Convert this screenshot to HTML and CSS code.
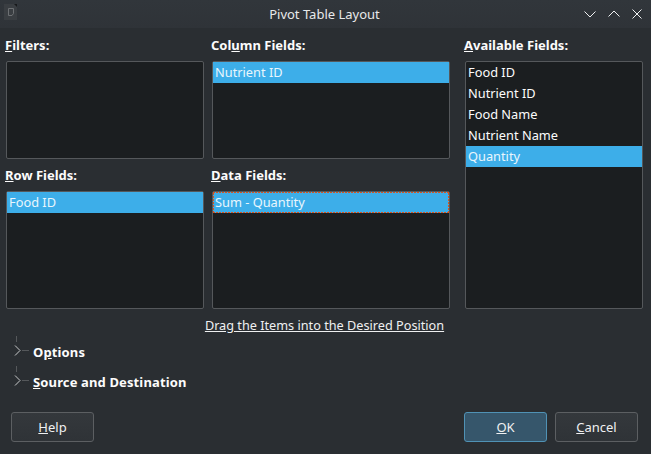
FILE: index.html
```html
<!DOCTYPE html>
<html>
  <head>
    <meta charset="utf-8" />
    <title>Pivot Table Layout</title>
    <link rel="stylesheet" href="styles.css">
  </head>

  <body>
    <div class="dialog">
      <header class="titlebar">
        <svg class="app-icon" width="18" height="18" viewBox="0 0 18 18">
          <rect x="1" y="1" width="13" height="16" fill="#3a3e42" />
          <path d="M5.500 5.500h5v5l-1.500 2h-3.500z" fill="none" stroke="#6d7073" />
          <path d="M11 1h3v3z" fill="#17191b" />
        </svg>
        <span class="title">Pivot Table Layout</span>
        <div class="window-buttons">
          <svg width="12" height="8" viewBox="0 0 12 8"><path d="M.5 1.500l5.500 5.500 5.500-5.500" /></svg>
          <svg width="12" height="8" viewBox="0 0 12 8"><path d="M.5 6.500l5.500-5.500 5.500 5.500" /></svg>
          <svg width="10" height="10" viewBox="0 0 10 10"><path d="M.5.500l9 9M9.500.500l-9 9" /></svg>
        </div>
      </header>

      <main class="fields">
        <section class="field filters">
          <h2><u>F</u>ilters:</h2>
          <ul class="list"></ul>
        </section>
        <section class="field columns">
          <h2>Col<u>u</u>mn Fields:</h2>
          <ul class="list"><li class="selected">Nutrient ID</li></ul>
        </section>
        <section class="field available">
          <h2><u>A</u>vailable Fields:</h2>
          <ul class="list">
            <li>Food ID</li>
            <li>Nutrient ID</li>
            <li>Food Name</li>
            <li>Nutrient Name</li>
            <li class="selected">Quantity</li>
          </ul>
        </section>
        <section class="field rows">
          <h2><u>R</u>ow Fields:</h2>
          <ul class="list"><li class="selected">Food ID</li></ul>
        </section>
        <section class="field data">
          <h2><u>D</u>ata Fields:</h2>
          <ul class="list"><li class="selected focused">Sum - Quantity</li></ul>
        </section>
      </main>

      <p class="hint">Drag the Items into the Desired Position</p>

      <div class="expander">
        <svg width="27" height="24" viewBox="0 0 27 24">
          <path class="guide" d="M10.500 0v6M16 14.500h7" />
          <path class="arrow" d="M9 9.500l5 5-5 5" />
        </svg>
        <span>O<u>p</u>tions</span>
      </div>
      <div class="expander">
        <svg width="27" height="24" viewBox="0 0 27 24">
          <path class="guide" d="M10.500 0v6M16 14.500h7" />
          <path class="arrow" d="M9 9.500l5 5-5 5" />
        </svg>
        <span><u>S</u>ource and Destination</span>
      </div>

      <footer class="buttons">
        <button><u>H</u>elp</button>
        <span class="spacer"></span>
        <button class="primary"><u>O</u>K</button>
        <button><u>C</u>ancel</button>
      </footer>
    </div>
  </body>
</html>
```

FILE: styles.css
```css
html {
  font-family: "Noto Sans", sans-serif;
  font-size: 13px;
}

body {
  margin: 0;
  background: #2a2e32;
  color: #fcfcfc;
}

.dialog {
  width: 651px;
  height: 454px;
  overflow: hidden;
}

.titlebar {
  height: 28px;
  display: flex;
  align-items: center;
  background: linear-gradient(#31363b, #2f3338);
  position: relative;
}
.app-icon {
  margin-left: 3px;
  margin-top: -4px;
}
.title {
  position: absolute;
  left: 0;
  right: 2px;
  text-align: center;
  color: #e8e9ea;
  line-height: 28px;
}
.window-buttons {
  margin-left: auto;
  margin-right: 9px;
  display: flex;
  align-items: center;
  gap: 12px;
  position: relative;
}
.window-buttons svg {
  fill: none;
  stroke: #eff0f1;
  stroke-width: 1;
}

.fields {
  display: grid;
  grid-template-columns: 198px 238px 185px;
  grid-template-rows: 98px 118px;
  grid-template-areas:
    "filters columns available"
    "rows data available";
  gap: 32px 8px;
  padding-top: 33px;
  padding-left: 6px;
}
.field {
  position: relative;
  display: flex;
  flex-direction: column;
  min-height: 0;
}
.filters { grid-area: filters; }
.columns { grid-area: columns; }
.rows { grid-area: rows; }
.data { grid-area: data; }
.available {
  grid-area: available;
  margin-left: 7px;
}

.field h2 {
  position: absolute;
  left: -1px;
  top: -26px;
  margin: 0;
  font-size: 13px;
  font-weight: bold;
  line-height: 20px;
  white-space: nowrap;
}

.list {
  flex: 1;
  list-style: none;
  margin: 0;
  padding: 0;
  background: #1b1e20;
  border: 1px solid #55585b;
  border-radius: 2px;
}
.list li {
  height: 21px;
  line-height: 21px;
  padding-left: 2px;
  font-size: 12.8px;
  color: #fcfcfc;
}
.list li.selected {
  background: #3daee9;
  color: #e9f6fd;
}
/* qt draws the focus rect as 2 on, 1 off */
.list li.focused {
  background:
    repeating-linear-gradient(90deg, #d9541e 0 2px, transparent 2px 3px) top / 100% 1px no-repeat,
    repeating-linear-gradient(90deg, #d9541e 0 2px, transparent 2px 3px) bottom / 100% 1px no-repeat,
    repeating-linear-gradient(0deg, #d9541e 0 2px, transparent 2px 3px) left / 1px 100% no-repeat,
    repeating-linear-gradient(0deg, #d9541e 0 2px, transparent 2px 3px) right / 1px 100% no-repeat,
    #3daee9;
}

.hint {
  margin: 6px 0 0;
  text-align: center;
  width: 649px;
  font-size: 12.7px;
  line-height: 20px;
  text-decoration: underline;
  color: #eff0f1;
}

.expander {
  display: flex;
  align-items: center;
  height: 30px;
  font-weight: bold;
  letter-spacing: 0.13px;
  padding-left: 6px;
}
.expander:first-of-type {
  margin-top: 2px;
}
.expander svg {
  fill: none;
  margin-top: -8px;
}
.expander .guide {
  stroke: #55585b;
}
.expander .arrow {
  stroke: #c8cacb;
}

.buttons {
  display: flex;
  gap: 8px;
  padding: 0 13px 0 11px;
  margin-top: 15px;
}
.spacer {
  flex: 1;
}
button {
  width: 83px;
  height: 30px;
  font: inherit;
  color: #eff0f1;
  background: linear-gradient(#34383c, #2f3337);
  border: 1px solid #5c5f62;
  border-radius: 3px;
  padding: 0;
}
button.primary {
  background: #36566b;
  border-color: #5092b5;
}
```
